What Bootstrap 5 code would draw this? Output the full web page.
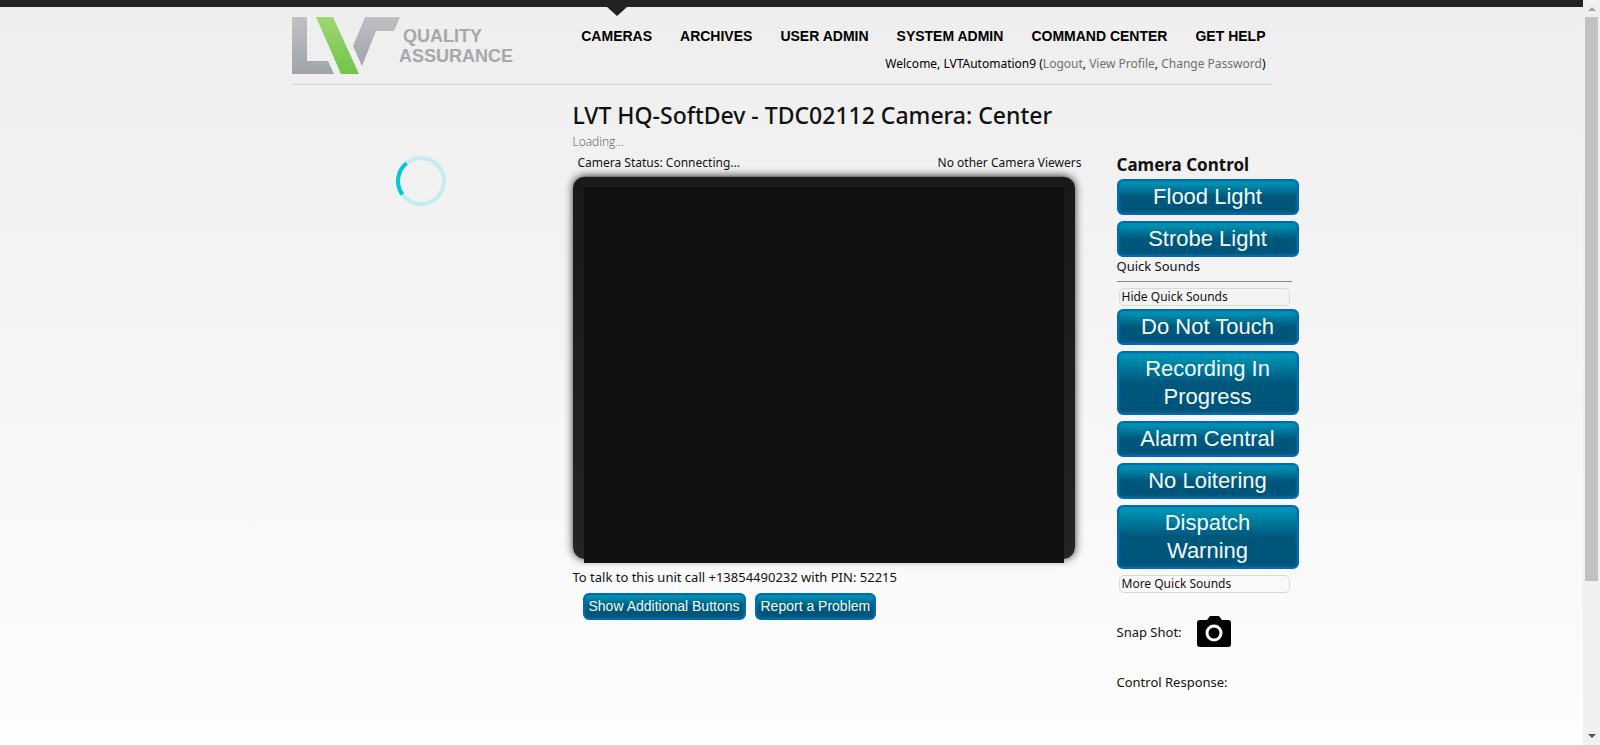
<!DOCTYPE html>
<html lang="en">
<head>
<meta charset="utf-8">
<meta name="viewport" content="width=device-width, initial-scale=1">
<title>LVT Quality Assurance - Camera</title>
<link href="https://cdn.jsdelivr.net/npm/bootstrap@5.3.0/dist/css/bootstrap.min.css" rel="stylesheet">
<style>
body { font-family: "Noto Sans", "Open Sans", sans-serif; font-size: 12px; line-height: 18px; color: #111; background: #fdfdfd; }
.page-body { background: linear-gradient(#eee, #fdfdfd); border-top: 7px solid #222; }
.page-inner { width: 100%; max-width: 1000px; margin: 0 auto; }
.site-header { max-width: 980px; height: 78px; padding: 9px 6px 0 0; border-bottom: 1px solid #d2d2d2; }
.main-menu { gap: 28px; padding-top: 10px; font: bold 14px/20px "Liberation Sans", Arial, sans-serif; }
.main-menu a { color: #000; text-decoration: none; }
.main-menu .current::before { content: ""; position: absolute; top: -19px; left: 50%; margin-left: -10px; border: 10px solid transparent; border-top: 9px solid #222; border-bottom: 0; }
.welcome { color: #000; margin-top: 9px; }
.welcome a { color: #707070; text-decoration: none; }
.spinner-pane { width: 258px; margin-right: 23px; padding-top: 71px; }
.camera-pane { width: 509px; margin-right: 35px; }
.camera-title { font-size: 23px; line-height: 30px; font-weight: 500; margin: 15px 0 4px; color: #111; }
.loading-note { font-family: "Open Sans", sans-serif; font-weight: 300; color: #555; line-height: 16px; }
.status-row { padding: 4px 0 4px 5px; }
.video-frame { width: 502px; height: 383px; padding: 10px 11px 0; border-radius: 12px; border-top: 1px solid #777; background: linear-gradient(#191919, #222426); box-shadow: 0 0 9px #333; }
.video-screen { height: 376px; background: #111; }
.call-note { margin-top: 9px; font-size: 13px; }
.extra-actions { gap: 9px; margin: 7px 0 0 10px; }
.blue-btn { font-family: "Liberation Sans", Arial, sans-serif; color: #f2faff; border: 2px solid #0069bd; border-radius: 6px; background: linear-gradient(#009abb, #00577b 50%, #005479); box-shadow: inset 0 0 3px #087c94; }
.blue-small { font-size: 14px; line-height: 18px; padding: 2px 4px 3px; }
.blue-large { display: block; width: 182px; font-size: 22px; line-height: 28px; padding: 2px 20px; margin-bottom: 6px; }
.control-pane { width: 182px; flex: none; padding-top: 69px; }
.control-title { font-size: 17px; line-height: 22px; font-weight: 700; margin: 0 0 3px; color: #111; }
.sound-rule { width: 175px; margin: 6px 0; border-top: 1px solid #888; opacity: 1; }
.fold-btn { display: block; width: 171px; height: 18px; margin: 0 0 3px 2px; padding: 0 2px; line-height: 16px; text-align: left; border: 1px solid #d8d8d8; border-radius: 5px; background: transparent; color: #111; }
.label-text { font-size: 13px; line-height: 18px; }
.snap-row { gap: 15px; margin-top: 23px; }
.response-label { margin-top: 26px; }
.scroll-rail { width: 17px; height: 100vh; top: 0; background: #f0f0f0; }
.scroll-rail svg { display: block; width: 17px; height: 17px; }
.scroll-thumb { width: 13px; height: 564px; background: #c1c1c1; }
</style>
</head>
<body>
<div class="d-flex">
<div class="page-body flex-grow-1 min-vh-100">
<div class="page-inner">
  <header class="site-header d-flex justify-content-between">
    <a href="#" aria-label="LVT Quality Assurance"><svg width="230" height="59" viewBox="0 0 230 59">
      <defs>
        <linearGradient id="gray" x2="0" y2="1"><stop stop-color="#bfc0c4"/><stop offset="1" stop-color="#a0a4a7"/></linearGradient>
        <linearGradient id="green" x2="0" y2="1"><stop stop-color="#a0d774"/><stop offset="1" stop-color="#70c44b"/></linearGradient>
      </defs>
      <path fill="url(#gray)" d="M0 1h15v44h21l6 13H0z"/>
      <path fill="url(#green)" d="M24 1h17l26 57H49z"/>
      <path fill="url(#gray)" d="M73 1h35l-6 14H84L70 50 61 30z"/>
      <g fill="#a5a9ac" font-family="Liberation Sans, Arial, sans-serif" font-size="18" font-weight="bold"><text x="111" y="26">QUALITY</text><text x="107" y="46">ASSURANCE</text></g>
    </svg></a>
    <div class="text-end">
      <nav class="main-menu d-flex" aria-label="Main">
        <a href="#" class="current position-relative" aria-current="page">CAMERAS</a><a href="#">ARCHIVES</a><a href="#">USER ADMIN</a><a href="#">SYSTEM ADMIN</a><a href="#">COMMAND CENTER</a><a href="#">GET HELP</a>
      </nav>
      <div class="welcome">Welcome, LVTAutomation9 (<a href="#">Logout</a>, <a href="#">View Profile</a>, <a href="#">Change Password</a>)</div>
    </div>
  </header>
  <main class="d-flex">
    <div class="spinner-pane flex-shrink-0 text-center" role="status" aria-label="Loading">
      <svg width="50" height="50" viewBox="0 0 50 50" fill="none" stroke-width="4"><circle cx="25" cy="25" r="23" stroke="#c2ecef"/><path d="M10.500 7.200A23 23 0 0 0 6.400 38.500" stroke="#00c8d7"/></svg>
    </div>
    <section class="camera-pane flex-shrink-0">
      <h1 class="camera-title text-nowrap">LVT HQ-SoftDev - TDC02112 Camera: Center</h1>
      <div class="loading-note">Loading...</div>
      <div class="status-row d-flex justify-content-between"><span>Camera Status: Connecting...</span><span>No other Camera Viewers</span></div>
      <div class="video-frame"><div class="video-screen"></div></div>
      <div class="call-note">To talk to this unit call +13854490232 with PIN: 52215</div>
      <div class="extra-actions d-flex"><button type="button" class="blue-btn blue-small">Show Additional Buttons</button><button type="button" class="blue-btn blue-small">Report a Problem</button></div>
    </section>
    <aside class="control-pane">
      <h2 class="control-title">Camera Control</h2>
      <button type="button" class="blue-btn blue-large">Flood Light</button>
      <button type="button" class="blue-btn blue-large mb-0">Strobe Light</button>
      <div class="label-text">Quick Sounds</div>
      <hr class="sound-rule">
      <button type="button" class="fold-btn">Hide Quick Sounds</button>
      <button type="button" class="blue-btn blue-large">Do Not Touch</button>
      <button type="button" class="blue-btn blue-large">Recording In Progress</button>
      <button type="button" class="blue-btn blue-large">Alarm Central</button>
      <button type="button" class="blue-btn blue-large">No Loitering</button>
      <button type="button" class="blue-btn blue-large">Dispatch Warning</button>
      <button type="button" class="fold-btn">More Quick Sounds</button>
      <div class="label-text snap-row d-flex align-items-center"><span>Snap Shot:</span>
        <button type="button" class="border-0 bg-transparent p-0" aria-label="Take snapshot"><svg class="d-block" width="34" height="31" viewBox="0 0 34 31"><path d="M3 4h7l3-4h9l3 4h6q3 0 3 3v21q0 3-3 3H3q-3 0-3-3V7q0-3 3-3z"/><circle cx="17" cy="17" r="7" fill="#000" stroke="#fff" stroke-width="3"/></svg></button>
      </div>
      <div class="label-text response-label">Control Response:</div>
    </aside>
  </main>
</div>
</div>
<div class="scroll-rail position-sticky flex-shrink-0 d-flex flex-column align-items-center" aria-hidden="true">
  <svg viewBox="0 0 17 17"><path d="M5 11l4-4 4 4z" fill="#a3a3a3"/></svg>
  <div class="scroll-thumb"></div>
  <svg class="mt-auto" viewBox="0 0 17 17"><path d="M5 6h8l-4 4z" fill="#505050"/></svg>
</div>
</div>
<script src="https://cdn.jsdelivr.net/npm/bootstrap@5.3.0/dist/js/bootstrap.bundle.min.js"></script>
</body>
</html>
